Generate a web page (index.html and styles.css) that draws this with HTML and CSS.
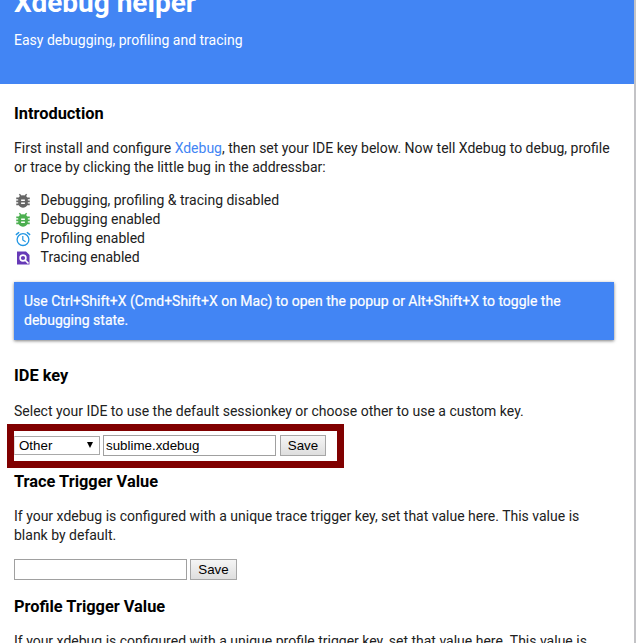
FILE: index.html
```html
<!DOCTYPE html>
<html lang="en">
<head>
<meta charset="utf-8">
<title>Xdebug helper</title>
<link rel="stylesheet" href="styles.css">
</head>
<body>
<svg class="defs" width="0" height="0">
  <symbol id="bug" viewBox="0 0 24 24"><path fill="currentColor" d="M21 8h-3.200a6 6 0 0 0-1.800-2L17.600 4.400 16.200 3l-2.200 2.200a6 6 0 0 0-4 0L7.800 3 6.400 4.400 8 6a6 6 0 0 0-1.800 2H3v2.300h2.600V12H3v2.300h2.600V16H3v2.300h3.300a6.600 6.600 0 0 0 11.400 0H21V16h-2.600v-1.700H21V12h-2.600v-1.700H21zM14.500 16.500h-5v-2h5zm0-4h-5v-2h5z"/></symbol>
</svg>
<main class="page">
  <header class="banner">
    <h1>Xdebug helper</h1>
    <p>Easy debugging, profiling and tracing</p>
  </header>
  <div class="content">
    <section>
      <h2>Introduction</h2>
      <p>First install and configure <a>Xdebug</a>, then set your IDE key below. Now tell Xdebug to debug, profile<br>or trace by clicking the little bug in the addressbar:</p>
      <ul class="states">
        <li><svg class="icon bug gray" viewBox="2 2 20 20"><use href="#bug" width="24" height="24"/></svg>Debugging, profiling &amp; tracing disabled</li>
        <li><svg class="icon bug green" viewBox="2 2 20 20"><use href="#bug" width="24" height="24"/></svg>Debugging enabled</li>
        <li><svg class="icon blue" viewBox="0 0 16 16" fill="none" stroke="currentColor"><circle cx="8" cy="8.600" r="5.900" stroke-width="1.300"/><path stroke-width="1.200" d="M7.800 5v4l2.800 1.700"/><path stroke-width="1.500" d="M.9 3.900 4.100 1.200M15.100 3.900l-3.200-2.700"/></svg>Profiling enabled</li>
        <li><svg class="icon" viewBox="0 0 16 16"><path fill="#673ab7" d="M2 1.500h9L14.500 5v9.500H2z"/><circle cx="8" cy="8" r="2.900" fill="none" stroke="#fff" stroke-width="1.600"/><path stroke="#fff" stroke-width="1.700" d="m10 10 3.500 3.500"/></svg>Tracing enabled</li>
      </ul>
      <div class="tip">Use Ctrl+Shift+X (Cmd+Shift+X on Mac) to open the popup or Alt+Shift+X to toggle the<br>debugging state.</div>
    </section>
    <section class="ide">
      <h2>IDE key</h2>
      <p>Select your IDE to use the default sessionkey or choose other to use a custom key.</p>
      <div class="highlight">
        <div class="select">Other<span class="arrow"></span></div>
        <input type="text" value="sublime.xdebug">
        <button>Save</button>
      </div>
    </section>
    <section>
      <h2>Trace Trigger Value</h2>
      <p>If your xdebug is configured with a unique trace trigger key, set that value here. This value is<br>blank by default.</p>
      <div class="row">
        <input type="text">
        <button>Save</button>
      </div>
    </section>
    <section>
      <h2>Profile Trigger Value</h2>
      <p>If your xdebug is configured with a unique profile trigger key, set that value here. This value is</p>
    </section>
  </div>
</main>
</body>
</html>
```
FILE: styles.css
```css
* { box-sizing: border-box; }
html, body { height: 643px; overflow: hidden; }
body { margin: 0; background: #fff; color: #212121; font: 14px/19px Roboto, sans-serif; white-space: nowrap; }
h1, h2, p, ul { margin: 0; padding: 0; }
.defs { display: block; }
.page { width: 636px; height: 643px; border-right: 2px solid #c3c3c6; overflow: hidden; }
.banner { display: flow-root; height: 84px; padding-left: 14px; background: #4285f4; color: #fff; }
h1 { height: 31px; margin-top: -13px; font-size: 28px; line-height: 32px; font-weight: 700; }
.banner p { margin-top: 13px; }
.content { padding: 20px 20px 0 14px; }
h2 { font-size: 16.380px; line-height: 19px; font-weight: 700; color: #000; margin-bottom: 16px; }
a { color: #4285f4; }
.states { list-style: none; margin: 14px 0 15px; }
.states li { display: flex; align-items: center; height: 19px; }
.icon { width: 18px; height: 16px; margin-right: 8.600px; flex: none; }
.bug { position: relative; top: -.5px; height: 15px; }
.gray { color: #666; }
.green { color: #4caf50; }
.blue { color: #2196e3; }
.tip { height: 58px; padding: 10px; background: #4285f4; color: #fff; -webkit-text-stroke: .2px #fff; box-shadow: 0 1px 3px rgba(0,0,0,.5); margin-bottom: 26px; }
.ide h2 { margin-bottom: 17px; }
.highlight { display: flex; align-items: center; width: 337px; height: 44px; margin: 3px 0 4px -7px; border: 7px solid #800000; }
.select, input, button { font: 13.333px "Liberation Sans", Arial, sans-serif; color: #000; }
.select { display: flex; align-items: center; justify-content: space-between; width: 86px; height: 19px; padding: 0 6px 0 4px; margin-right: 3px; border: 1px solid #a9a9a9; border-left-color: #ddd; }
.arrow { border: 3.500px solid transparent; border-top: 6px solid #000; border-bottom: 0; }
input { width: 173px; height: 21px; margin: 0 4px 0 0; padding: 0 2px; border: 1px solid #a0a0a0; background: #fff; }
.highlight input, .highlight button, .select { position: relative; top: -1px; }
button { width: 46px; height: 21px; padding: 0; border: 1px solid #a6a6a6; border-radius: 0; background: linear-gradient(#f5f5f5, #dedede); }
.row { display: flex; margin: 14px 0 17px; }
.row input { margin-right: 3px; }
.row button { width: 47px; }
```
